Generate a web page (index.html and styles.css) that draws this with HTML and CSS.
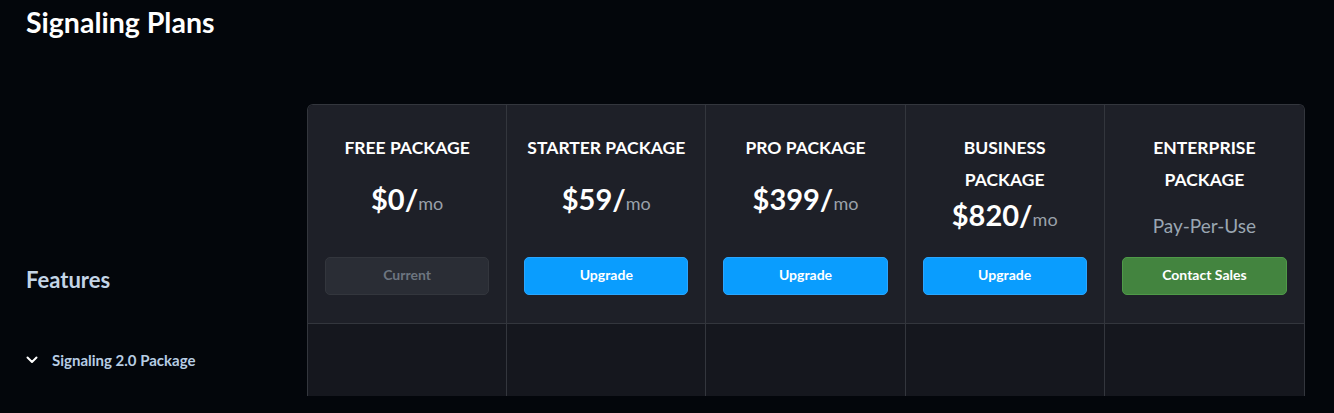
FILE: index.html
```html
<!DOCTYPE html>
<html>
<head>
    <link rel="stylesheet" href="styles.css">
</head>
<body>
    <div class="page">
        <h1 class="page-title">Signaling Plans</h1>
        <div class="plans">
            <div class="side">
                <h2 class="features-title">Features</h2>
                <div class="group-toggle">
                    <svg class="chevron" width="12" height="8" viewBox="0 0 12 8"><path d="M1.5 1.5 L6 6 L10.5 1.5" fill="none" stroke="#fff" stroke-width="2" stroke-linecap="round" stroke-linejoin="round"/></svg>
                    <span>Signaling 2.0 Package</span>
                </div>
            </div>
            <div class="table">
                <div class="cell head">
                    <div class="plan-name">FREE PACKAGE</div>
                    <div class="plan-price"><b>$0/</b><span>mo</span></div>
                    <button class="btn btn-current">Current</button>
                </div>
                <div class="cell head">
                    <div class="plan-name">STARTER PACKAGE</div>
                    <div class="plan-price"><b>$59/</b><span>mo</span></div>
                    <button class="btn btn-upgrade">Upgrade</button>
                </div>
                <div class="cell head">
                    <div class="plan-name">PRO PACKAGE</div>
                    <div class="plan-price"><b>$399/</b><span>mo</span></div>
                    <button class="btn btn-upgrade">Upgrade</button>
                </div>
                <div class="cell head wrap">
                    <div class="plan-name">BUSINESS<br>PACKAGE</div>
                    <div class="plan-price"><b>$820/</b><span>mo</span></div>
                    <button class="btn btn-upgrade">Upgrade</button>
                </div>
                <div class="cell head wrap">
                    <div class="plan-name">ENTERPRISE<br>PACKAGE</div>
                    <div class="plan-note">Pay-Per-Use</div>
                    <button class="btn btn-sales">Contact Sales</button>
                </div>
                <div class="cell body"></div>
                <div class="cell body"></div>
                <div class="cell body"></div>
                <div class="cell body"></div>
                <div class="cell body"></div>
            </div>
        </div>
    </div>
</body>
</html>
```

FILE: styles.css
```css
* {
    box-sizing: border-box;
}
html, body {
    margin: 0;
    height: 100%;
    background: #03060b;
    overflow: hidden;
}
body {
    font-family: Lato, "Noto Sans", sans-serif;
    color: #fff;
}
.page {
    padding: 4px 29px 0 26px;
}
.page-title {
    margin: 0;
    font-size: 28.5px;
    line-height: 36px;
    font-weight: 700;
}
.plans {
    display: flex;
    margin-top: 64px;
}
.side {
    width: 281px;
    flex: none;
    padding-top: 161px;
}
.features-title {
    margin: 0;
    font-size: 22px;
    line-height: 30px;
    font-weight: 700;
    color: #c3d4e6;
}
.group-toggle {
    display: flex;
    align-items: center;
    gap: 14px;
    margin-top: 55px;
    font-size: 15px;
    line-height: 20px;
    font-weight: 700;
    color: #b7cde4;
}
.chevron {
    display: block;
}
.table {
    flex: 1;
    display: grid;
    grid-template-columns: repeat(5, 1fr);
    grid-template-rows: 219px 72px;
    border: 1px solid #33363d;
    border-bottom: none;
    border-radius: 6px 6px 0 0;
    overflow: hidden;
}
.cell {
    border-right: 1px solid #33363d;
    text-align: center;
}
.cell:nth-child(5n) {
    border-right: none;
}
.head {
    background: #1e2028;
    border-bottom: 1px solid #33363d;
    padding: 27px 17px 28px;
    display: flex;
    flex-direction: column;
}
.body {
    background: #15171e;
}
.plan-name {
    font-size: 17.5px;
    line-height: 32px;
    font-weight: 700;
    white-space: nowrap;
}
.plan-price {
    margin-top: 16px;
    line-height: 38px;
}
.wrap .plan-price {
    margin-top: 0;
}
.plan-price b {
    font-size: 29px;
    font-weight: 700;
}
.plan-price span {
    font-size: 18px;
    color: #9aa1aa;
}
.plan-note {
    margin-top: 18px;
    font-size: 19px;
    line-height: 24px;
    color: #9aa6b2;
}
.btn {
    margin-top: auto;
    height: 38px;
    width: 100%;
    padding: 0 0 3px;
    border-radius: 5px;
    font-family: inherit;
    font-size: 14px;
    font-weight: 700;
    color: #fff;
    border: 1px solid transparent;
}
.btn-current {
    background: #2a2d35;
    border-color: #33363d;
    color: #6d7580;
}
.btn-upgrade {
    background: #0a9dfe;
    border-color: #2aa6ff;
}
.btn-sales {
    background: #43843f;
    border-color: #4f9a48;
}
```
